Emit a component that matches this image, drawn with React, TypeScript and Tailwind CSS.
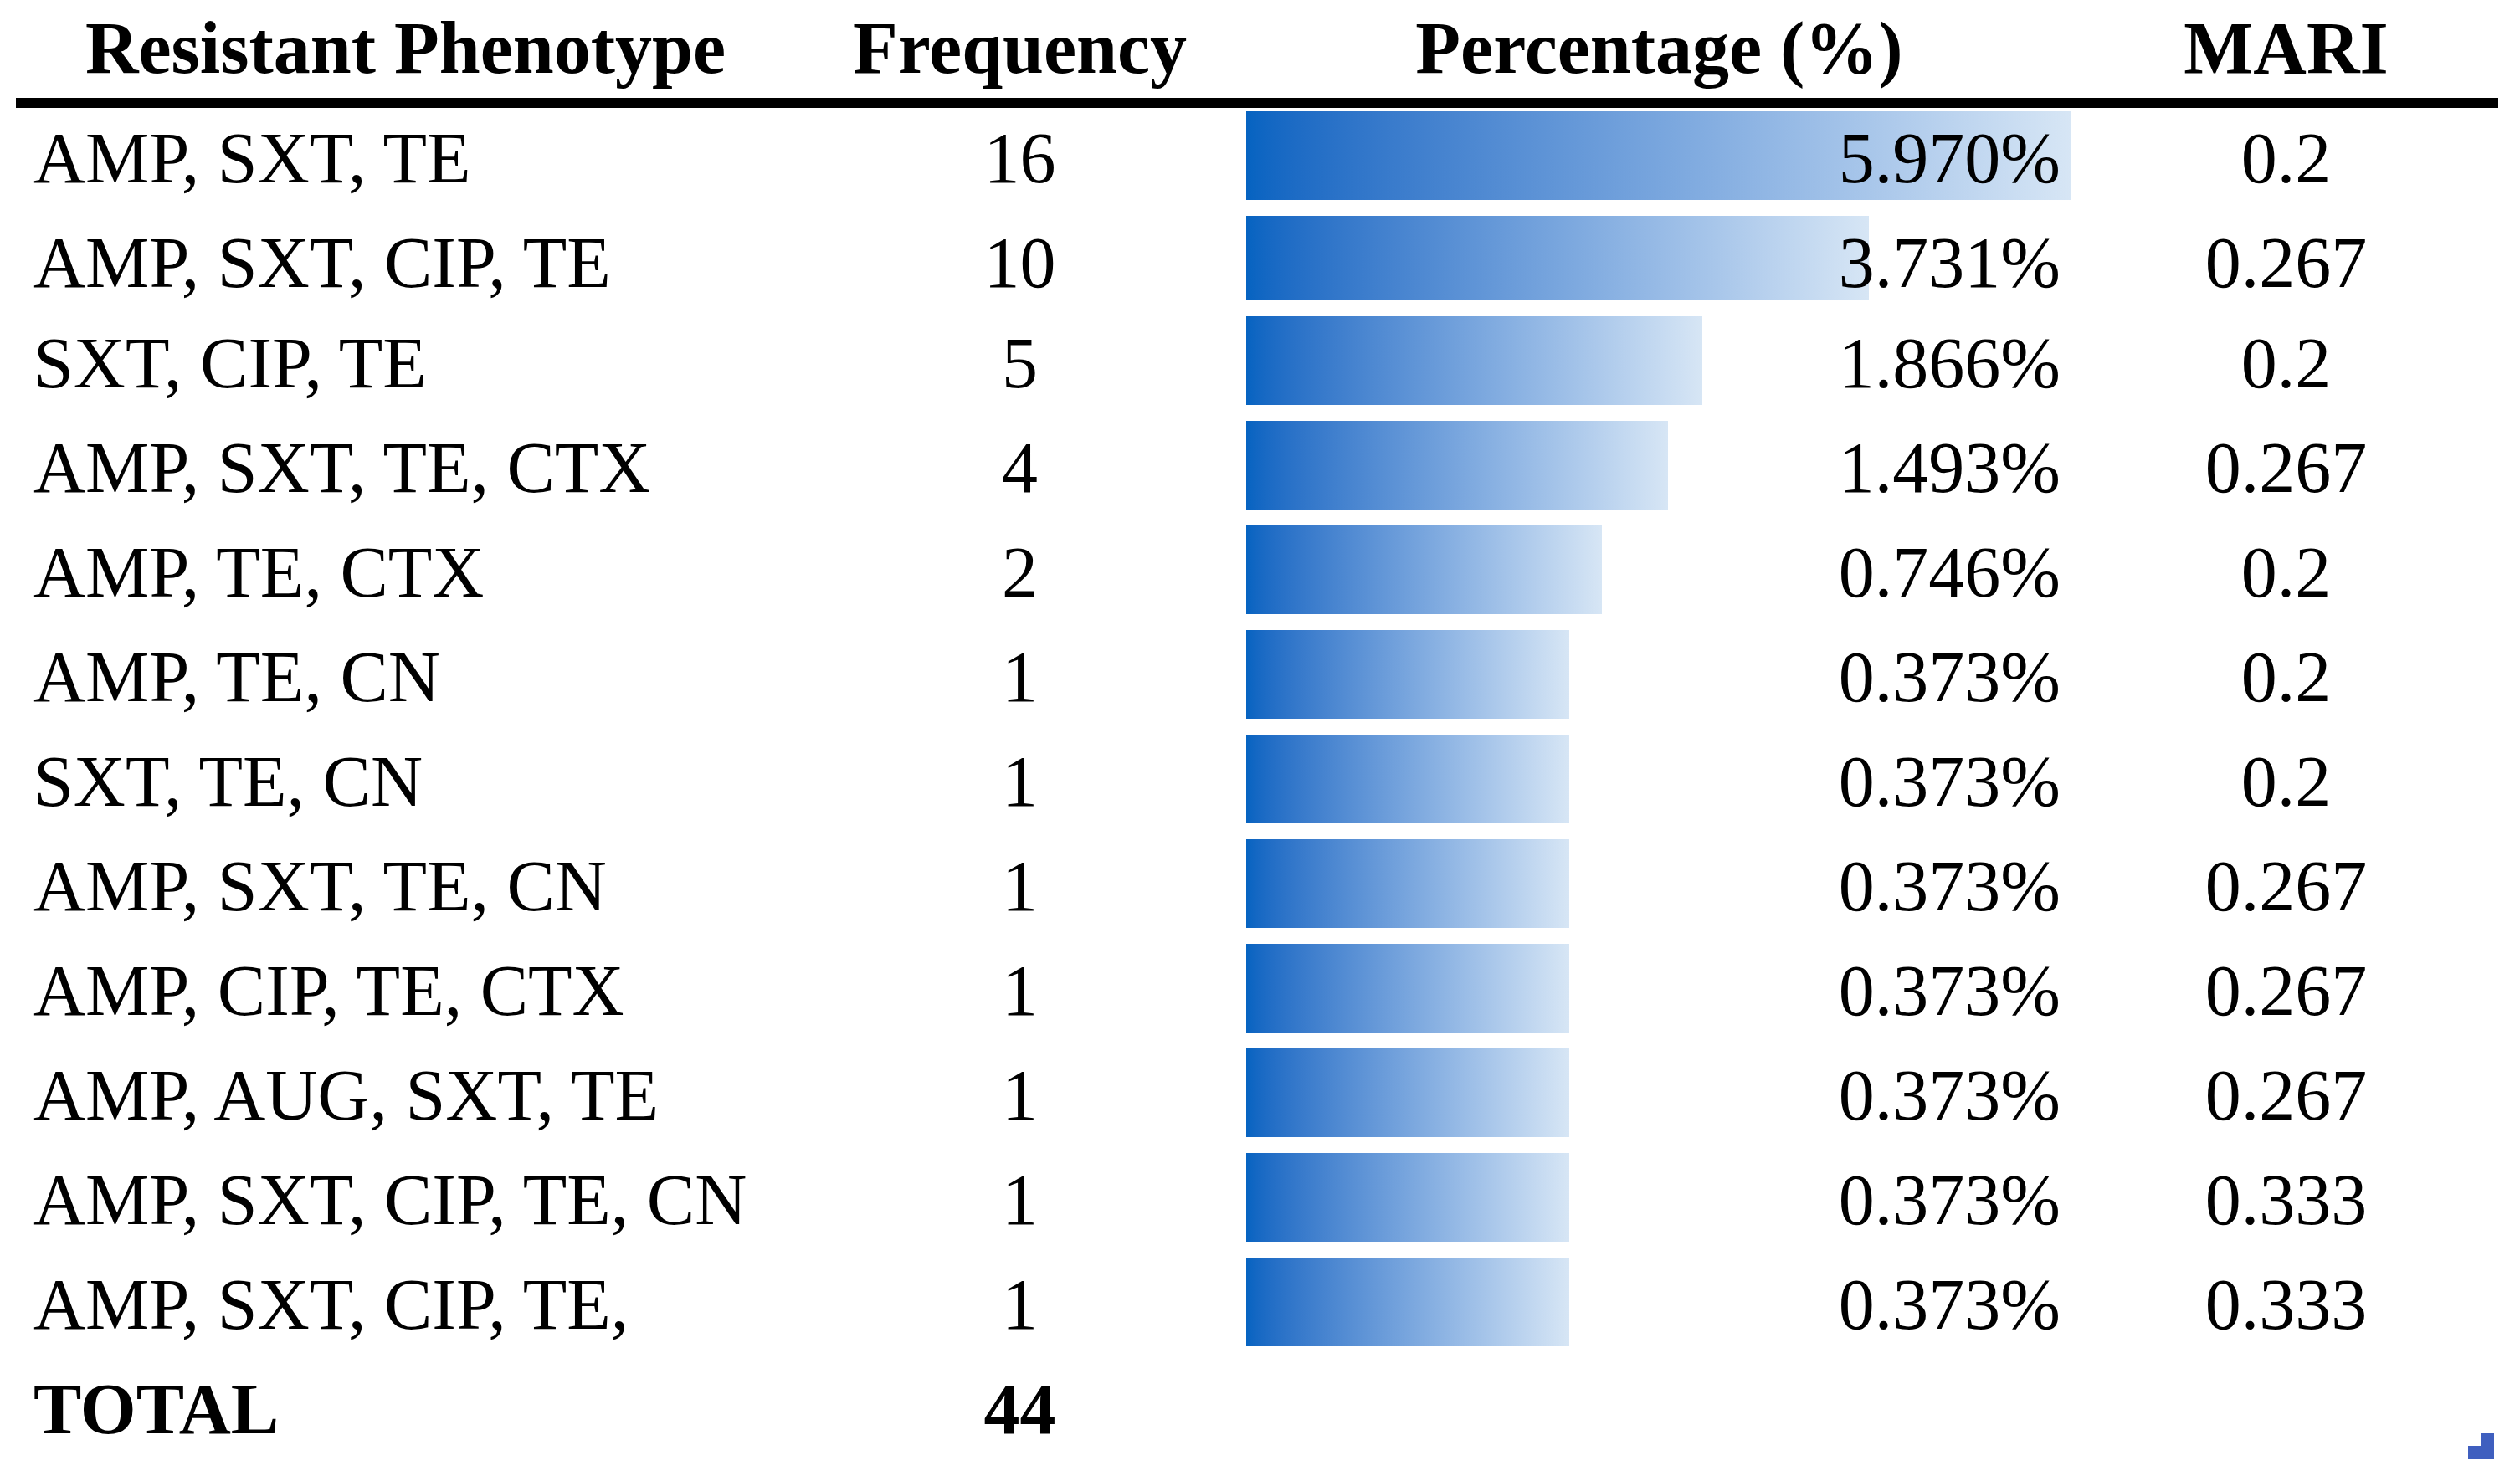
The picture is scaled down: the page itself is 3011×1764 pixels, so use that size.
type Row = {
  phenotype: string;
  freq: number;
  pct: string;
  bar: number;
  mari: string;
  short?: boolean;
};

const rows: Row[] = [
  { phenotype: "AMP, SXT, TE", freq: 16, pct: "5.970%", bar: 986, mari: "0.2" },
  { phenotype: "AMP, SXT, CIP, TE", freq: 10, pct: "3.731%", bar: 744, mari: "0.267", short: true },
  { phenotype: "SXT, CIP, TE", freq: 5, pct: "1.866%", bar: 545, mari: "0.2" },
  { phenotype: "AMP, SXT, TE, CTX", freq: 4, pct: "1.493%", bar: 504, mari: "0.267" },
  { phenotype: "AMP, TE, CTX", freq: 2, pct: "0.746%", bar: 425, mari: "0.2" },
  { phenotype: "AMP, TE, CN", freq: 1, pct: "0.373%", bar: 386, mari: "0.2" },
  { phenotype: "SXT, TE, CN", freq: 1, pct: "0.373%", bar: 386, mari: "0.2" },
  { phenotype: "AMP, SXT, TE, CN", freq: 1, pct: "0.373%", bar: 386, mari: "0.267" },
  { phenotype: "AMP, CIP, TE, CTX", freq: 1, pct: "0.373%", bar: 386, mari: "0.267" },
  { phenotype: "AMP, AUG, SXT, TE", freq: 1, pct: "0.373%", bar: 386, mari: "0.267" },
  { phenotype: "AMP, SXT, CIP, TE, CN", freq: 1, pct: "0.373%", bar: 386, mari: "0.333" },
  { phenotype: "AMP, SXT, CIP, TE,", freq: 1, pct: "0.373%", bar: 386, mari: "0.333" },
];

function DataRow({ row }: { row: Row }) {
  return (
    <div className={row.short ? "flex h-[120px]" : "flex h-[125px]"}>
      <div className="w-[931px] pl-[21px] pt-[17px]">{row.phenotype}</div>
      <div className="w-[537px] pt-[17px] text-center">{row.freq}</div>
      <div className="grid w-[991px] grid-cols-1">
        <div className="col-start-1 row-start-1 pl-[2px] pt-[4px]">
          <div
            className={
              row.short
                ? "h-[101px] bg-gradient-to-r from-[#0563c1] to-[#d7e6f5]"
                : "h-[106px] bg-gradient-to-r from-[#0563c1] to-[#d7e6f5]"
            }
            style={{ width: row.bar }}
          />
        </div>
        <div className="col-start-1 row-start-1 pr-[16px] pt-[17px] text-right">{row.pct}</div>
      </div>
      <div className="w-[507px] pt-[17px] text-center">{row.mari}</div>
    </div>
  );
}

export default function App() {
  return (
    <div className="relative h-[1764px] w-[3011px] bg-white font-['Liberation_Serif',serif] text-black">
      <div className="ml-[19px] w-[2966px]">
        <div className="flex h-[129px] border-b-[12px] border-black text-[88px] font-bold leading-none">
          <div className="w-[931px] pt-[14px] text-center">Resistant Phenotype</div>
          <div className="w-[537px] pt-[14px] text-center">Frequency</div>
          <div className="w-[991px] pt-[14px] text-center">Percentage (%)</div>
          <div className="w-[507px] pt-[14px] text-center">MARI</div>
        </div>
        <div className="text-[86px] leading-none">
          {rows.map((r, i) => (
            <DataRow key={i} row={r} />
          ))}
          <div className="flex h-[125px] font-bold">
            <div className="w-[931px] pl-[21px] pt-[17px]">TOTAL</div>
            <div className="w-[537px] pt-[17px] text-center">44</div>
          </div>
        </div>
      </div>
      <div className="absolute left-[2949px] top-[1713px] flex items-end">
        <div className="h-[16px] w-[15px] bg-[#3f5fbf]" />
        <div className="h-[31px] w-[16px] bg-[#3f5fbf]" />
      </div>
    </div>
  );
}
